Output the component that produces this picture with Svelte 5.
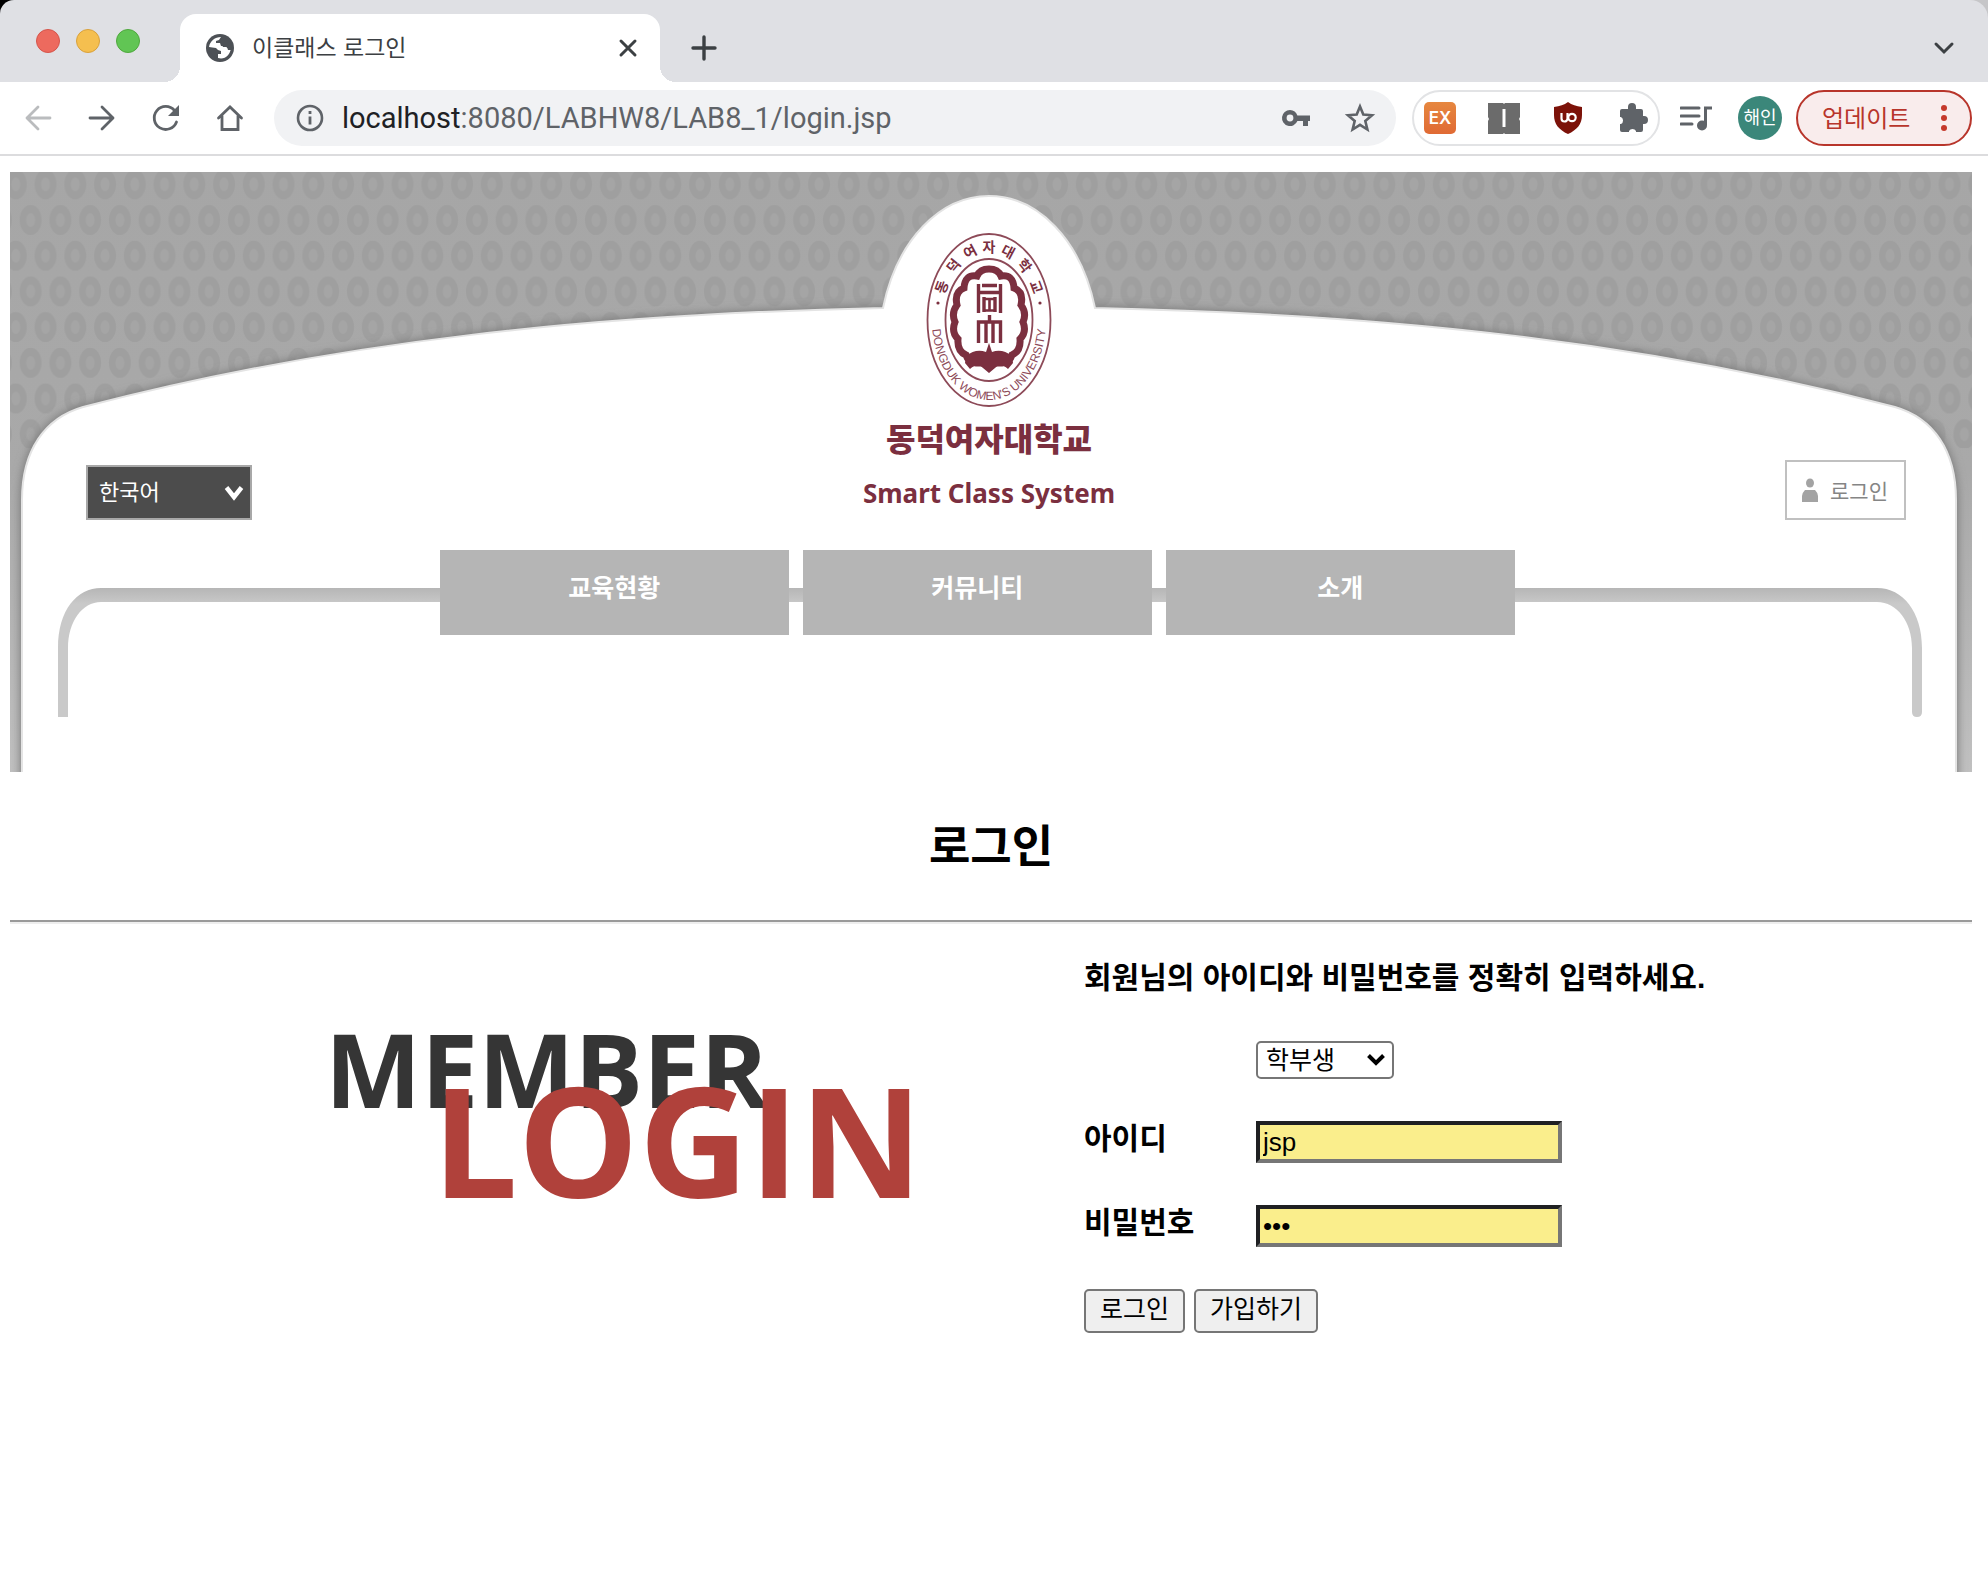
<script>
  let menus = ['교육현황', '커뮤니티', '소개'];
  let userId = $state('jsp');
  let password = $state('jsp');

  // Characters set around the upper half of the seal
  const sealName = [...'동덕여자대학교'].map((ch, i) => {
    const t = ((i - 3) * 21 * Math.PI) / 180;
    return {
      ch,
      x: 63 + 53 * Math.sin(t),
      y: 88 - 73 * Math.cos(t),
      turn: (Math.atan2(73 * Math.sin(t), 53 * Math.cos(t)) * 180) / Math.PI
    };
  });
</script>

<div class="window">
  <header class="chrome">
    <div class="strip-back">
      <div class="strip">
        <div class="lights">
          <button class="light red" aria-label="닫기"></button>
          <button class="light yellow" aria-label="최소화"></button>
          <button class="light green" aria-label="확대"></button>
        </div>
        <div class="tab">
          <svg class="globe" viewBox="0 0 28 28" aria-hidden="true">
            <circle cx="14" cy="14" r="14" fill="#4d5156" />
            <path d="M15 3C9 3 4 7 3 13l7 1 2 2 3 1v3l-3 0v4c7 2 12-3 13-10l-4 0-1-2-5 0-1-3-4 0V7l3-1 2-3z" fill="#fff" />
            <path d="M16 3l-3 4v2h2l2 4h4l1 3h3c2-7-3-12-9-13zM3 14c1 6 5 10 9 10v-4l3-1v-2l-4 0-2-3z" fill="#4d5156" />
          </svg>
          <span class="tab-title">이클래스 로그인</span>
          <button class="plain close" aria-label="탭 닫기">
            <svg viewBox="0 0 32 32"><path d="M9 9l14 14M23 9L9 23" stroke="#3c4043" stroke-width="3" stroke-linecap="round" /></svg>
          </button>
        </div>
        <button class="plain new-tab" aria-label="새 탭">
          <svg viewBox="0 0 32 32"><path d="M16 5v22M5 16h22" stroke="#3c4043" stroke-width="3.4" stroke-linecap="round" /></svg>
        </button>
        <button class="plain tab-search" aria-label="탭 검색">
          <svg viewBox="0 0 32 32"><path d="M8 12l8 8 8-8" fill="none" stroke="#3c4043" stroke-width="3" stroke-linecap="round" /></svg>
        </button>
      </div>
    </div>

    <div class="toolbar">
      <div class="nav-buttons">
        <button class="plain" aria-label="뒤로">
          <svg viewBox="0 0 32 32"><path d="M28 16H5M16 5L5 16l11 11" fill="none" stroke="#babcbe" stroke-width="2.8" stroke-linecap="round" stroke-linejoin="round" /></svg>
        </button>
        <button class="plain" aria-label="앞으로">
          <svg viewBox="0 0 32 32"><path d="M4 16h23M16 5l11 11-11 11" fill="none" stroke="#5f6368" stroke-width="2.8" stroke-linecap="round" stroke-linejoin="round" /></svg>
        </button>
        <button class="plain" aria-label="새로고침">
          <svg viewBox="0 0 32 32"><path d="M26.5 20A11.5 11.5 0 1 1 24.500 8.500" fill="none" stroke="#5f6368" stroke-width="2.8" stroke-linecap="round" /><path d="M29 3v11H18z" fill="#5f6368" /></svg>
        </button>
        <button class="plain" aria-label="홈">
          <svg viewBox="0 0 32 32"><path d="M4.500 16L16 5l11.500 11M8 14v13.500h16V14" fill="none" stroke="#5f6368" stroke-width="2.8" stroke-linecap="round" /></svg>
        </button>
      </div>

      <div class="address">
        <svg viewBox="0 0 32 32" aria-hidden="true">
          <circle cx="16" cy="16" r="12" fill="none" stroke="#5f6368" stroke-width="2.6" />
          <path d="M16 14.500v8M16 9v3" stroke="#5f6368" stroke-width="2.8" />
        </svg>
        <span class="url"><b>localhost</b>:8080/LABHW8/LAB8_1/login.jsp</span>
        <button class="plain" aria-label="비밀번호 관리">
          <svg viewBox="0 0 32 32"><path d="M10 8a8 8 0 1 0 7.400 11H23v5h5v-5h2v-5.500H17.400A8 8 0 0 0 10 8zm0 4.600a3.400 3.400 0 1 1 0 6.800 3.400 3.400 0 0 1 0-6.800z" fill="#5f6368" fill-rule="evenodd" /></svg>
        </button>
        <button class="plain star" aria-label="북마크">
          <svg viewBox="0 0 32 32"><path d="M16 4.500l3.300 8.100 8.700.7-6.700 5.700 2.100 8.500-7.400-4.600-7.400 4.600 2.100-8.500L4 13.300l8.700-.7z" fill="none" stroke="#5f6368" stroke-width="2.6" /></svg>
        </button>
      </div>

      <div class="extensions">
        <button class="plain ex" aria-label="EX 확장 프로그램">EX</button>
        <button class="plain" aria-label="확장 프로그램">
          <svg viewBox="0 0 32 32"><path d="M0 1h15l1 1 1-1h15v14l-1 2 1 2v13H17l-1-1-1 1H0V19l1-2-1-2z" fill="#6b6b6b" /><path d="M16 7v18" stroke="#fff" stroke-width="3" /></svg>
        </button>
        <button class="plain" aria-label="uBlock Origin">
          <svg viewBox="0 0 32 32"><path d="M16 0c4 3 8 4 14 5v8c0 9-5 15-14 19C7 28 2 22 2 13V5c6-1 10-2 14-5z" fill="#7c1209" /><path d="M9.500 11v5.500a3 3 0 0 0 6 0V11" fill="none" stroke="#fff" stroke-width="2.200" /><circle cx="20" cy="15.500" r="3.700" fill="none" stroke="#fff" stroke-width="2.200" /></svg>
        </button>
        <button class="plain" aria-label="확장 프로그램 메뉴">
          <svg viewBox="0 0 32 32"><path d="M12 5a4 4 0 0 1 8 0v2h5a2 2 0 0 1 2 2v5h1a4 4 0 0 1 0 8h-1v6a2 2 0 0 1-2 2h-5v-1a4 4 0 0 0-7 0v1H6a2 2 0 0 1-2-2v-6h1a4 4 0 0 0 0-7H4V9a2 2 0 0 1 2-2h6z" fill="#5f6368" /></svg>
        </button>
      </div>

      <button class="plain music" aria-label="미디어 제어">
        <svg viewBox="0 0 32 32"><path d="M1 6h18M1 14h18M1 22h11" stroke="#5f6368" stroke-width="3" stroke-linecap="round" /><path d="M25.500 23V6H32" fill="none" stroke="#5f6368" stroke-width="3" /><ellipse cx="22" cy="23.500" rx="5" ry="5" fill="#5f6368" /></svg>
      </button>
      <button class="plain avatar">해인</button>
      <button class="update">
        <span>업데이트</span>
        <svg viewBox="0 0 8 28" aria-hidden="true"><g fill="#c5392b"><circle cx="4" cy="4" r="3" /><circle cx="4" cy="14" r="3" /><circle cx="4" cy="24" r="3" /></g></svg>
      </button>
    </div>
  </header>

  <main>
    <section class="banner">
      <svg class="backdrop" viewBox="10 172 1962 600" preserveAspectRatio="none" aria-hidden="true">
        <defs>
          <pattern id="rings" x="0.900" y="166.500" width="29.750" height="71.400" patternUnits="userSpaceOnUse">
            <g fill="#9f9f9f">
              <ellipse cx="14.900" cy="17.800" rx="11" ry="15" />
              <ellipse cx="0" cy="53.500" rx="11" ry="15" />
              <ellipse cx="29.750" cy="53.500" rx="11" ry="15" />
            </g>
            <g fill="#a5a5a5">
              <ellipse cx="14.900" cy="17.800" rx="4.500" ry="7" />
              <ellipse cx="0" cy="53.500" rx="4.500" ry="7" />
              <ellipse cx="29.750" cy="53.500" rx="4.500" ry="7" />
            </g>
          </pattern>
          <linearGradient id="wall" x1="0" y1="0" x2="0" y2="1">
            <stop offset="0" stop-color="#a6a6a6" />
            <stop offset="0.500" stop-color="#a9a9a9" />
            <stop offset="1" stop-color="#c0c0c0" />
          </linearGradient>
          <linearGradient id="pipe" gradientUnits="userSpaceOnUse" x1="0" y1="588" x2="0" y2="604">
            <stop offset="0" stop-color="#b6b6b6" />
            <stop offset="1" stop-color="#c9c9c9" />
          </linearGradient>
          <filter id="soft" x="-5%" y="-5%" width="110%" height="110%"><feGaussianBlur stdDeviation="5" /></filter>
        </defs>
        <rect x="10" y="172" width="1962" height="600" fill="url(#wall)" />
        <rect x="10" y="172" width="1962" height="276" fill="url(#rings)" />
        <path d="M22 800V500C22 450 45 418 83 407C340 340 600 314 883 308H1095C1378 314 1638 340 1895 407C1933 418 1956 450 1956 500V800" fill="#777" stroke="#777" stroke-width="3" filter="url(#soft)" />
        <path d="M22 800V500C22 450 45 418 83 407C340 340 600 314 883 308C897 240 940 196 989 196C1038 196 1081 240 1095 308C1378 314 1638 340 1895 407C1933 418 1956 450 1956 500V800" fill="#fff" stroke="#e4e4e4" stroke-width="2" />
        <path d="M58 717V648C58 610 77 588 101 588H1877C1903 588 1922 612 1922 648V712Q1922 717 1917 717T1912 712V648C1912 622 1897 602 1877 602H101C82 602 68 622 68 648V717Z" fill="url(#pipe)" />
      </svg>

      <div class="banner-top">
        <label class="language">
          <select aria-label="언어">
            <option>한국어</option>
          </select>
          <svg viewBox="0 0 20 18" aria-hidden="true"><path d="M2.500 3.500L10 13l7.500-9.500" fill="none" stroke="#fff" stroke-width="4.500" /></svg>
        </label>

        <div class="brand">
          <svg class="seal" viewBox="0 0 126 176" role="img" aria-label="동덕여자대학교">
            <defs><path id="lower" d="M6 88A57 80 0 0 0 120 88" /></defs>
            <g fill="none" stroke="#8d4a58" stroke-width="1.800">
              <ellipse cx="63" cy="88" rx="61.500" ry="86" />
              <ellipse cx="63" cy="88" rx="43.500" ry="61" />
            </g>
            <g class="seal-name">
              {#each sealName as s}
                <text transform="translate({s.x} {s.y}) rotate({s.turn})" text-anchor="middle" dy="5">{s.ch}</text>
              {/each}
            </g>
            <circle cx="12" cy="71" r="1.600" fill="#7b2f3f" />
            <circle cx="114" cy="71" r="1.600" fill="#7b2f3f" />
            <text class="seal-latin" text-anchor="middle"><textPath href="#lower" startOffset="50%">DONGDUK WOMEN'S UNIVERSITY</textPath></text>
            <path d="M51 44Q54 37 63 37T75 44Q87 42 88 56Q98 60 95 73Q101 81 97 90Q101 100 94 107Q95 119 86 123Q84 130 76 131H50Q42 130 40 123Q31 119 32 107Q25 100 29 90Q25 81 31 73Q28 60 38 56Q39 42 51 44Z" fill="none" stroke="#7b2f3f" stroke-width="7" />
            <path d="M40 124Q50 116 60 120L63 111L66 120Q76 116 86 124L87 131L82 137Q74 130 69 136L63 141L57 136Q52 130 44 137L39 131Z" fill="#7b2f3f" />
            <g fill="none" stroke="#7b2f3f" stroke-width="3.400">
              <path d="M52.500 52V81M74.500 52V81M56 53.500H71M52 60.500H75M58 65V80M69 65V80" />
              <path d="M58 67H69M58 78.500H69M63.500 67V79" stroke-width="2.600" />
              <path d="M52.500 111V90H74.500V111M60 90V111M67 90V111M63.500 83V90" />
            </g>
          </svg>
          <strong class="brand-kr">동덕여자대학교</strong>
          <span class="brand-en">Smart Class System</span>
        </div>

        <button class="banner-login">
          <svg viewBox="0 0 16 24" aria-hidden="true"><ellipse cx="8" cy="5" rx="4" ry="4.500" fill="#a3a3a3" /><path d="M0 24v-6q0-3 3-6h10q3 3 3 6v6z" fill="#a3a3a3" /></svg>
          <span>로그인</span>
        </button>
      </div>

      <nav class="menu">
        {#each menus as m}
          <a href="#menu">{m}</a>
        {/each}
      </nav>
    </section>

    <h1>로그인</h1>
    <hr />

    <section class="login">
      <div class="art">
        <svg viewBox="0 0 600 190" role="img" aria-label="MEMBER LOGIN">
          <text x="1" y="88" font-size="102" fill="#353535">MEMBER</text>
          <text x="108" y="178" font-size="152" fill="#b0413b">LOGIN</text>
        </svg>
      </div>

      <form onsubmit={(e) => e.preventDefault()}>
        <p>회원님의 아이디와 비밀번호를 정확히 입력하세요.</p>
        <div class="role">
          <select aria-label="회원 구분">
            <option>학부생</option>
          </select>
          <svg viewBox="0 0 20 14" aria-hidden="true"><path d="M2.500 2.500L10 10l7.500-7.500" fill="none" stroke="#000" stroke-width="4" /></svg>
        </div>
        <div class="field">
          <label for="uid">아이디</label>
          <input id="uid" type="text" bind:value={userId} />
        </div>
        <div class="field">
          <label for="pw">비밀번호</label>
          <input id="pw" type="password" bind:value={password} />
        </div>
        <div class="actions">
          <button type="submit">로그인</button>
          <button type="button">가입하기</button>
        </div>
      </form>
    </section>
  </main>
</div>

<style>
  :global(body) {
    margin: 0;
    background: #fff;
  }

  .window {
    font-family: 'Liberation Sans', 'Noto Sans CJK KR', sans-serif;
    color: #000;
  }

  .window * {
    box-sizing: border-box;
  }

  svg {
    display: block;
    flex: none;
  }

  .plain {
    display: block;
    flex: none;
    width: 32px;
    height: 32px;
    padding: 0;
    border: 0;
    background: none;
    font-family: inherit;
  }

  .plain svg {
    width: 32px;
    height: 32px;
  }

  /* Tab strip */
  .strip-back {
    background: linear-gradient(90deg, #000 50%, #c6c6c8 50%);
  }

  .strip {
    display: flex;
    align-items: center;
    height: 82px;
    padding: 14px 28px 0 36px;
    border-radius: 14px 18px 0 0;
    background: #dfe0e4;
  }

  .lights {
    display: flex;
    gap: 16px;
    width: 144px;
    padding-bottom: 14px;
  }

  .light {
    width: 24px;
    height: 24px;
    padding: 0;
    border: 1px solid #d5554b;
    border-radius: 50%;
    background: #ed6a5e;
  }

  .yellow {
    border-color: #d9a13c;
    background: #f5bf4f;
  }

  .green {
    border-color: #4fa83d;
    background: #61c554;
  }

  .tab {
    position: relative;
    display: flex;
    align-items: center;
    width: 480px;
    height: 68px;
    padding: 0 16px 0 26px;
    border-radius: 16px 16px 0 0;
    background: #fff;
  }

  .tab::before,
  .tab::after {
    content: '';
    position: absolute;
    bottom: 0;
    width: 16px;
    height: 16px;
  }

  .tab::before {
    right: 100%;
    background: radial-gradient(circle at 0 0, transparent 16px, #fff 16px);
  }

  .tab::after {
    left: 100%;
    background: radial-gradient(circle at 100% 0, transparent 16px, #fff 16px);
  }

  .globe {
    width: 28px;
    height: 28px;
  }

  .tab-title {
    flex: 1;
    padding-left: 18px;
    color: #3c4043;
    font-size: 23px;
    line-height: 32px;
  }

  .new-tab {
    margin-left: 28px;
  }

  .tab-search {
    margin-left: auto;
  }

  /* Toolbar */
  .toolbar {
    display: flex;
    align-items: center;
    height: 74px;
    padding: 0 16px 0 22px;
    border-bottom: 2px solid #dcdcde;
    background: #fff;
  }

  .nav-buttons {
    display: flex;
    gap: 32px;
  }

  .address {
    display: flex;
    flex: 1;
    align-items: center;
    height: 56px;
    margin: 0 16px 0 28px;
    padding: 0 20px;
    border-radius: 28px;
    background: #f1f2f4;
  }

  .address svg {
    width: 32px;
    height: 32px;
  }

  .url {
    flex: 1;
    padding-left: 16px;
    color: #5f6368;
    font-family: Roboto, sans-serif;
    font-size: 29px;
    line-height: 40px;
  }

  .url b {
    color: #202124;
    font-weight: 400;
  }

  .star {
    margin-left: 32px;
  }

  .extensions {
    display: flex;
    align-items: center;
    justify-content: space-between;
    width: 248px;
    height: 56px;
    padding: 0 10px;
    border: 2px solid #e2e3e5;
    border-radius: 28px;
  }

  .ex {
    border-radius: 5px;
    background: linear-gradient(#e6873f, #e06a34);
    color: #fff;
    font-family: Inter, sans-serif;
    font-size: 17px;
    font-weight: 600;
  }

  .music {
    margin-left: 20px;
  }

  .avatar {
    width: 44px;
    height: 44px;
    margin: 0 14px 0 26px;
    border-radius: 50%;
    background: #3b877a;
    color: #fff;
    font-size: 18px;
    line-height: 44px;
  }

  .update {
    display: flex;
    align-items: center;
    justify-content: space-between;
    width: 176px;
    height: 56px;
    padding: 0 22px 0 24px;
    border: 2px solid #b8352b;
    border-radius: 28px;
    background: #f9ecec;
    color: #b8352b;
    font-family: inherit;
    font-size: 24px;
  }

  .update span {
    padding-bottom: 3px;
  }

  .update svg {
    width: 8px;
    height: 28px;
  }

  /* Page */
  main {
    padding: 16px 16px 0 10px;
  }

  .banner {
    position: relative;
    min-height: 600px;
    background: #fff;
  }

  .backdrop {
    position: absolute;
    inset: 0;
    width: 100%;
    height: 100%;
  }

  .banner-top {
    position: relative;
    display: grid;
    grid-template-columns: 1fr auto 1fr;
    align-items: end;
    height: 348px;
    padding: 0 66px 0 62px;
  }

  .language {
    position: relative;
    display: block;
    width: 166px;
    margin-left: 14px;
  }

  .language select {
    display: block;
    width: 100%;
    height: 55px;
    padding: 0 11px;
    appearance: none;
    border: 2px solid #a8a8a8;
    border-radius: 0;
    background: #4c4c4c;
    color: #fff;
    font-family: inherit;
    font-size: 22px;
  }

  .language svg {
    position: absolute;
    top: 19px;
    right: 8px;
    width: 20px;
    height: 18px;
  }

  .brand {
    display: flex;
    flex-direction: column;
    align-items: center;
    padding-bottom: 6px;
    color: #7b2f3f;
  }

  .seal {
    width: 126px;
    height: 176px;
  }

  .seal-name {
    fill: #7b2f3f;
    font-size: 14px;
    font-weight: 700;
  }

  .seal-latin {
    fill: #8d4a58;
    font-size: 12px;
  }

  .brand-kr {
    font-size: 32px;
    font-weight: 900;
    line-height: 64px;
  }

  .brand-en {
    font-family: 'Noto Sans', sans-serif;
    font-size: 26px;
    font-weight: 700;
    line-height: 42px;
  }

  .banner-login {
    display: flex;
    align-items: center;
    justify-self: end;
    justify-content: space-between;
    width: 121px;
    height: 60px;
    padding: 0 16px 0 15px;
    border: 2px solid #c0c0c0;
    background: #fff;
    color: #858585;
    font-family: inherit;
    font-size: 21px;
  }

  .banner-login svg {
    width: 16px;
    height: 24px;
  }

  .menu {
    position: relative;
    display: grid;
    grid-template-columns: repeat(3, 1fr);
    gap: 14px;
    margin: 30px 23.3% 0 21.9%;
  }

  .menu a {
    padding-bottom: 8px;
    background: #b5b5b5;
    color: #fff;
    font-size: 25px;
    font-weight: 700;
    line-height: 77px;
    text-align: center;
    text-decoration: none;
  }

  h1 {
    margin: 0;
    padding-top: 4px;
    font-size: 45px;
    font-weight: 700;
    line-height: 144px;
    text-align: center;
  }

  hr {
    height: 4px;
    margin: 0;
    border: 0;
    border-top: 2px solid #9a9a9a;
    border-bottom: 2px solid #eee;
  }

  .login {
    display: grid;
    grid-template-columns: 1074fr 888fr;
    padding-top: 33px;
  }

  .art {
    display: flex;
    justify-content: flex-end;
    padding: 63px 160px 0 0;
  }

  .art svg {
    width: 600px;
    height: 190px;
    overflow: visible;
    font-family: 'Open Sans', sans-serif;
    font-weight: 700;
  }

  form {
    display: grid;
    gap: 42px;
    justify-items: start;
  }

  p {
    margin: 0;
    font-size: 30px;
    font-weight: 700;
    line-height: 42px;
    white-space: nowrap;
  }

  .role {
    position: relative;
    width: 138px;
    margin-left: 172px;
  }

  .role select {
    display: block;
    width: 100%;
    height: 38px;
    padding: 0 8px;
    appearance: none;
    border: 2px solid #767676;
    border-radius: 5px;
    background: #fff;
    color: #000;
    font-family: inherit;
    font-size: 25px;
    line-height: 32px;
  }

  .role svg {
    position: absolute;
    top: 12px;
    right: 8px;
    width: 20px;
    height: 14px;
  }

  .field {
    display: grid;
    grid-template-columns: 172px 306px;
    align-items: start;
    height: 42px;
  }

  .field label {
    font-size: 30px;
    font-weight: 700;
    line-height: 36px;
  }

  .field input {
    width: 100%;
    height: 42px;
    padding: 0 3px;
    border: 4px solid;
    border-color: #1f2022 #767676 #767676 #1f2022;
    border-radius: 0;
    background: #faee8c;
    color: #000;
    font-family: 'Liberation Sans', sans-serif;
    font-size: 26px;
  }

  .actions {
    display: flex;
    gap: 9px;
  }

  .actions button {
    height: 44px;
    padding: 0 14px 4px;
    border: 2px solid #767676;
    border-radius: 5px;
    background: #efefef;
    color: #000;
    font-family: inherit;
    font-size: 25px;
    line-height: 36px;
  }
</style>
